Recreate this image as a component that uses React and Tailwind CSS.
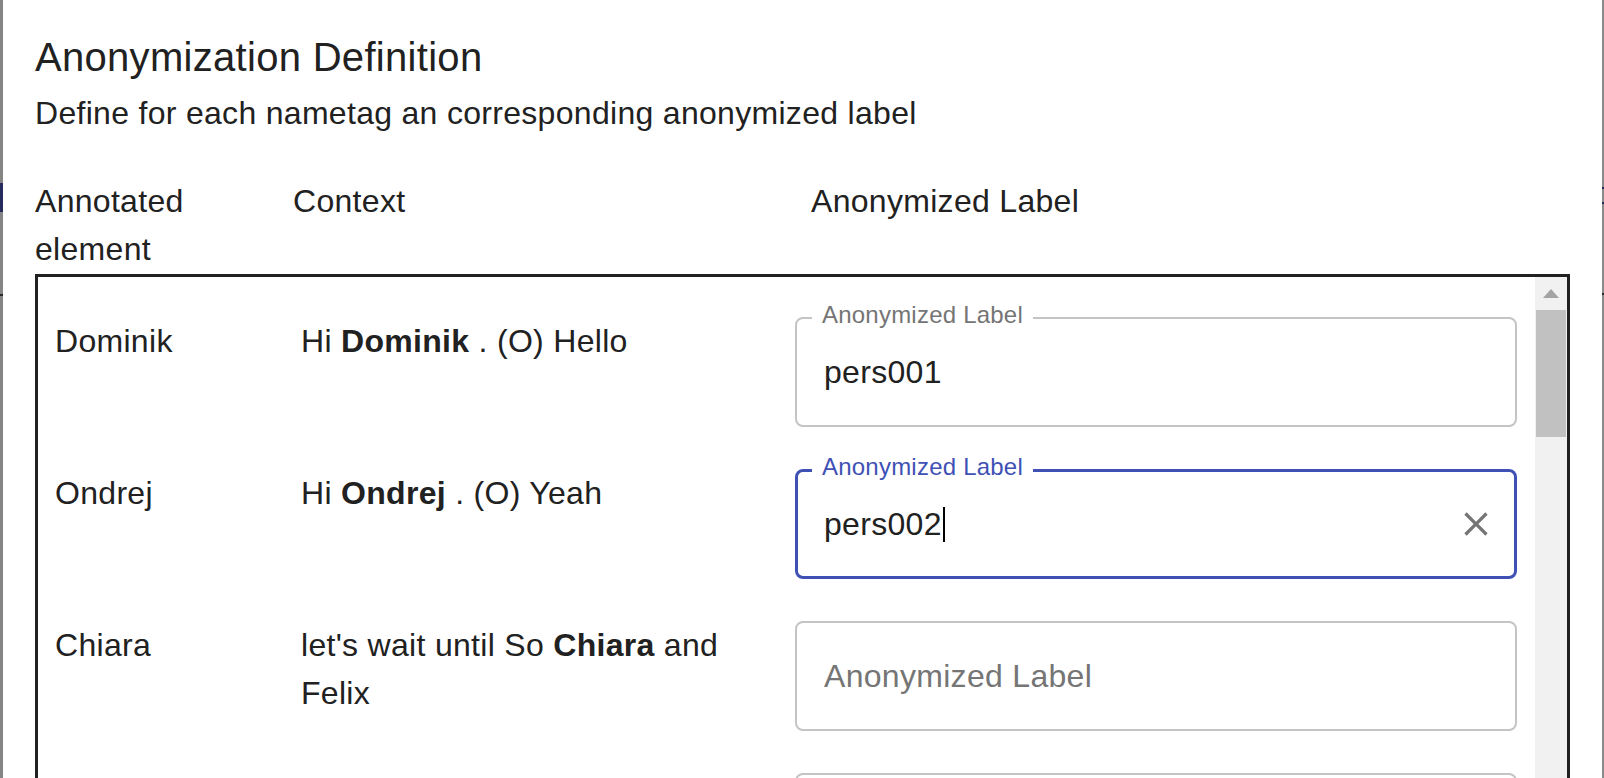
import React from 'react';

const rows = [
  { name: 'Dominik', pre: 'Hi ', tag: 'Dominik', post: ' . (O) Hello', value: 'pers001' },
  { name: 'Ondrej', pre: 'Hi ', tag: 'Ondrej', post: ' . (O) Yeah', value: 'pers002', focused: true },
  { name: 'Chiara', pre: "let's wait until So ", tag: 'Chiara', post: ' and Felix', value: '' },
];

function ClearIcon() {
  return (
    <svg viewBox="0 0 24 24" className="h-[40px] w-[40px] shrink-0 fill-[#757575]" aria-hidden="true">
      <path d="M19 6.41L17.59 5 12 10.59 6.41 5 5 6.41 10.59 12 5 17.59 6.41 19 12 13.41 17.59 19 19 17.59 13.41 12z" />
    </svg>
  );
}

function LabelField({ value, focused }) {
  if (focused) {
    return (
      <div className="relative flex h-[110px] w-[722px] shrink-0 items-center rounded-[8px] border-[3px] border-[#3f51b5] pl-[26px]">
        <span className="absolute -top-[17px] left-[14px] bg-white px-[10px] text-[24px] leading-[24px] tracking-[0.22px] text-[#3f51b5]">
          Anonymized Label
        </span>
        <span className="text-[32px] leading-[46px] tracking-[0.3px] text-[#212121]">{value}</span>
        <span className="ml-px h-[35px] w-[2px] bg-black" />
        <span className="ml-auto mr-[18px] flex">
          <ClearIcon />
        </span>
      </div>
    );
  }

  if (!value) {
    return (
      <div className="flex h-[110px] w-[722px] shrink-0 items-center rounded-[8px] border-2 border-[#c4c4c4] pl-[27px]">
        <span className="text-[32px] leading-[46px] tracking-[0.3px] text-[#757575]">Anonymized Label</span>
      </div>
    );
  }

  return (
    <div className="relative flex h-[110px] w-[722px] shrink-0 items-center rounded-[8px] border-2 border-[#c4c4c4] pl-[27px]">
      <span className="absolute -top-[16px] left-[15px] bg-white px-[10px] text-[24px] leading-[24px] tracking-[0.22px] text-[#757575]">
        Anonymized Label
      </span>
      <span className="text-[32px] leading-[46px] tracking-[0.3px] text-[#212121]">{value}</span>
    </div>
  );
}

function Row({ row }) {
  return (
    <div className="mb-[42px] flex items-start text-[32px] leading-[48px] tracking-[0.3px]">
      <div className="w-[246px] shrink-0">{row.name}</div>
      <div className="w-[494px] shrink-0 pr-[20px]">
        {row.pre}
        <b className="font-bold">{row.tag}</b>
        {row.post}
      </div>
      <LabelField value={row.value} focused={row.focused} />
    </div>
  );
}

export default function App() {
  return (
    <div className="flex h-[778px] w-[1604px] overflow-hidden bg-white font-['Liberation_Sans',Arial,sans-serif] text-[#212121]">
      {/* backdrop strip, left */}
      <div className="flex w-[3px] shrink-0 flex-col bg-[#858585]">
        <div className="h-[183px]" />
        <div className="h-[29px] bg-[#252b5c]" />
        <div className="h-[82px]" />
        <div className="h-[2px] bg-[#2a2a2a]" />
      </div>

      <div className="min-w-0 flex-1 px-[32px] pt-[25px]">
        <h2 className="text-[40px] leading-[64px] tracking-[0.3px]">Anonymization Definition</h2>
        <p className="text-[32px] leading-[48px] tracking-[0.3px]">
          Define for each nametag an corresponding anonymized label
        </p>

        <div className="mt-[40px] flex text-[32px] leading-[48px] tracking-[0.3px]">
          <div className="w-[258px] shrink-0 pr-[10px]">Annotated element</div>
          <div className="w-[518px] shrink-0">Context</div>
          <div>Anonymized Label</div>
        </div>

        <div className="mt-px flex h-[620px] border-[3px] border-[#212121]">
          <div className="min-w-0 flex-1 overflow-hidden pl-[17px] pt-[40px]">
            {rows.map((row) => (
              <Row key={row.name} row={row} />
            ))}
            {/* next row, only its field's top edge is in view */}
            <div className="ml-[740px] h-[110px] w-[722px] rounded-[8px] border-2 border-[#c4c4c4]" />
          </div>

          {/* scrollbar */}
          <div className="flex w-[32px] shrink-0 flex-col bg-[#f1f1f1]">
            <div className="flex h-[33px] items-center justify-center">
              <svg viewBox="0 0 16 9" className="h-[9px] w-[16px] fill-[#a3a3a3]" aria-hidden="true">
                <path d="M8 0L16 9H0z" />
              </svg>
            </div>
            <div className="mx-px h-[127px] bg-[#c1c1c1]" />
          </div>
        </div>
      </div>

      {/* backdrop strip, right */}
      <div className="flex w-[2px] shrink-0 flex-col bg-[#8a8a8a]">
        <div className="h-[187px]" />
        <div className="h-[2px] bg-[#252b5c]" />
        <div className="h-[13px]" />
        <div className="h-[2px] bg-[#252b5c]" />
        <div className="h-[89px]" />
        <div className="h-[2px] bg-[#2a2a2a]" />
      </div>
    </div>
  );
}
